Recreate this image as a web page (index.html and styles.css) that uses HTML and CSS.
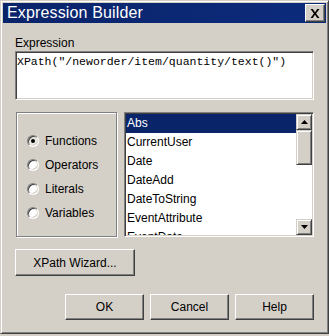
FILE: index.html
```html
<!DOCTYPE html>
<html lang="en">
<head>
  <meta charset="utf-8">
  <title>Expression Builder</title>
  <link rel="stylesheet" href="styles.css">
</head>
<body>
  <!-- Dialog window -->
  <div class="window">
    <div class="titlebar">
      <span class="title">Expression Builder</span>
      <button class="close" aria-label="Close">
        <svg width="10" height="9" viewBox="0 0 10 9">
          <path d="M0.5 0h2.2L5 3.2 7.3 0h2.2L6.1 4.5 9.5 9H7.3L5 5.8 2.7 9H0.5l3.4-4.5z" fill="#000"/>
        </svg>
      </button>
    </div>

    <div class="content">
      <label class="field-label" for="expr">Expression</label>
      <div class="expr" id="expr">XPath("/neworder/item/quantity/text()")</div>

      <div class="pickers">
        <!-- Category radios -->
        <div class="groupbox">
          <div class="radio-row"><span class="radio checked"></span>Functions</div>
          <div class="radio-row"><span class="radio"></span>Operators</div>
          <div class="radio-row"><span class="radio"></span>Literals</div>
          <div class="radio-row"><span class="radio"></span>Variables</div>
        </div>

        <!-- Function list -->
        <div class="listbox">
          <ul class="items">
            <li class="selected">Abs</li>
            <li>CurrentUser</li>
            <li>Date</li>
            <li>DateAdd</li>
            <li>DateToString</li>
            <li>EventAttribute</li>
            <li>EventDate</li>
          </ul>
          <div class="scrollbar">
            <div class="sb-btn">
              <svg width="7" height="4" viewBox="0 0 7 4"><path d="M3.5 0L7 4H0z" fill="#000"/></svg>
            </div>
            <div class="sb-thumb"></div>
            <div class="sb-track"></div>
            <div class="sb-btn">
              <svg width="7" height="4" viewBox="0 0 7 4"><path d="M0 0h7L3.5 4z" fill="#000"/></svg>
            </div>
          </div>
        </div>
      </div>

      <button class="btn wizard">XPath Wizard...</button>

      <div class="actions">
        <button class="btn">OK</button>
        <button class="btn">Cancel</button>
        <button class="btn">Help</button>
      </div>
    </div>
  </div>
</body>
</html>
```

FILE: styles.css
```css
/* Reset */
* {
  margin: 0;
  padding: 0;
  box-sizing: border-box;
}

body {
  background-color: #d4d0c8;
  font-family: 'Liberation Sans', Arial, sans-serif;
  font-size: 12px;
  color: #000;
}

/* Window frame */
.window {
  width: 329px;
  height: 334px;
  background-color: #d4d0c8;
  border: 1px solid;
  border-color: #d4d0c8 #404040 #404040 #d4d0c8;
  box-shadow: inset 1px 1px #fff, inset -1px -1px #808080;
  padding: 2px;
  display: flex;
  flex-direction: column;
}

/* Title bar */
.titlebar {
  height: 20px;
  background: linear-gradient(to right, #0a246a, #0c2b7c);
  display: flex;
  align-items: center;
  justify-content: space-between;
  padding: 0 1px 0 4px;
}

.title {
  color: #fff;
  font-size: 16px;
  line-height: 20px;
  letter-spacing: 0.15px;
}

.close {
  width: 20px;
  height: 18px;
  background-color: #d4d0c8;
  border: 1px solid;
  border-color: #fff #404040 #404040 #fff;
  box-shadow: inset -1px -1px #808080;
  display: flex;
  align-items: center;
  justify-content: center;
}

/* Dialog body */
.content {
  padding: 13px 12px 0 12px;
  display: flex;
  flex-direction: column;
}

.field-label {
  line-height: 14px;
  margin-bottom: 1px;
}

.expr {
  height: 49px;
  background-color: #fff;
  border: 1px solid;
  border-color: #808080 #fff #fff #808080;
  box-shadow: inset 1px 1px #404040, inset -1px -1px #d4d0c8;
  padding: 3px 1px;
  font-family: 'Liberation Mono', 'Courier New', monospace;
  font-size: 11.5px;
  line-height: 13px;
}

.pickers {
  display: flex;
  gap: 7px;
  margin-top: 12px;
  height: 125px;
}

/* Etched group box */
.groupbox {
  width: 101px;
  margin-left: 1px;
  border: 1px solid #808080;
  box-shadow: inset 1px 1px #fff, 1px 1px #fff;
  padding: 16px 0 0 10px;
}

.radio-row {
  height: 24px;
  display: flex;
  align-items: center;
}

.radio {
  width: 12px;
  height: 12px;
  border-radius: 50%;
  background-color: #fff;
  border: 1px solid;
  border-color: #808080 #fff #fff #808080;
  box-shadow: inset 1px 1px #404040, inset -1px -1px #d4d0c8;
  margin-right: 6px;
  display: flex;
  align-items: center;
  justify-content: center;
}

.radio.checked {
  background-color: #ebe9e4;
}

.radio.checked::after {
  content: "";
  width: 4px;
  height: 4px;
  border-radius: 50%;
  background-color: #000;
}

/* List box */
.listbox {
  flex: 1;
  display: flex;
  background-color: #fff;
  border: 1px solid;
  border-color: #808080 #fff #fff #808080;
  box-shadow: inset 1px 1px #404040, inset -1px -1px #d4d0c8;
  padding: 1px;
  overflow: hidden;
}

.items {
  flex: 1;
  list-style: none;
  overflow: hidden;
}

.items li {
  height: 19px;
  line-height: 19px;
  padding-left: 1px;
  white-space: nowrap;
}

.items li.selected {
  background-color: #0a246a;
  color: #fff;
}

.scrollbar {
  width: 16px;
  display: flex;
  flex-direction: column;
}

.sb-btn,
.sb-thumb {
  background-color: #d4d0c8;
  border: 1px solid;
  border-color: #d4d0c8 #404040 #404040 #d4d0c8;
  box-shadow: inset 1px 1px #fff, inset -1px -1px #808080;
}

.sb-btn {
  height: 16px;
  display: flex;
  align-items: center;
  justify-content: center;
}

.sb-thumb {
  height: 35px;
}

.sb-track {
  flex: 1;
  background-color: #fff;
}

/* Buttons */
.btn {
  font-family: 'Liberation Sans', Arial, sans-serif;
  font-size: 12px;
  color: #000;
  background-color: #d4d0c8;
  border: 1px solid;
  border-color: #fff #404040 #404040 #fff;
  box-shadow: inset -1px -1px #808080;
}

.wizard {
  width: 120px;
  height: 27px;
  margin-top: 12px;
}

.actions {
  display: flex;
  justify-content: flex-end;
  gap: 6px;
  margin-top: 18px;
}

.actions .btn {
  width: 79px;
  height: 26px;
}
```
